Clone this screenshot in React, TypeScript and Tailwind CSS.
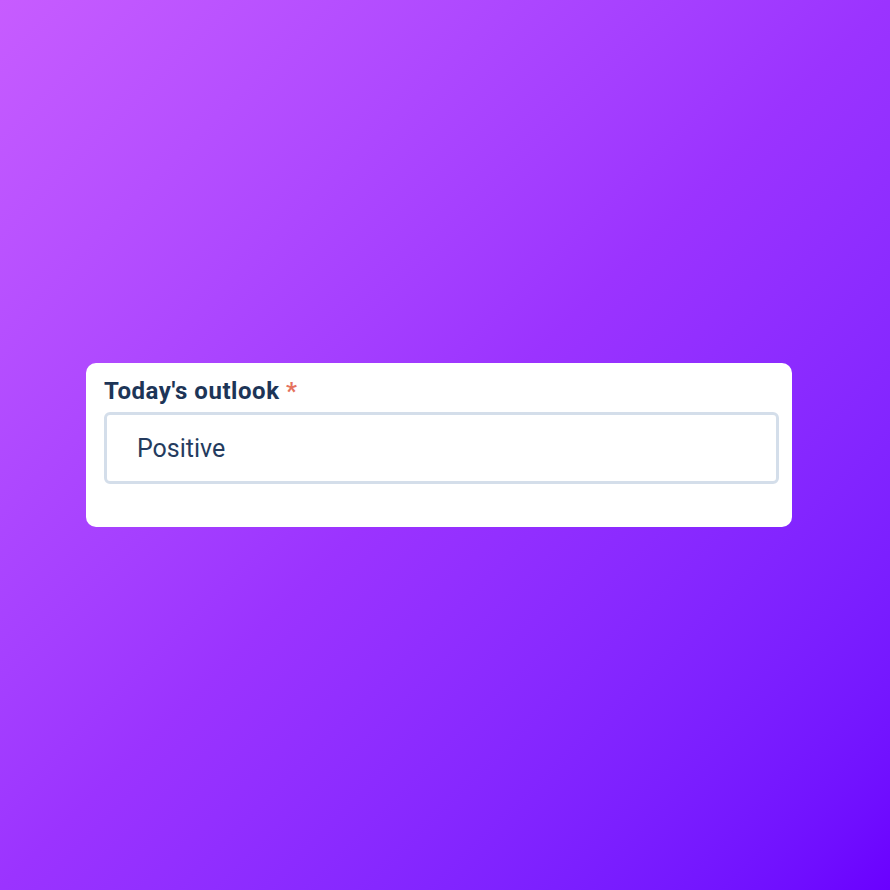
export default function App() {
  return (
    <div className="min-h-screen w-full bg-gradient-to-br from-[#c75cff] via-[#9b33ff] to-[#6a00ff] flex items-center font-['Roboto',sans-serif]">
      <div className="ml-[86px] w-[706px] bg-white rounded-[10px] pt-[13px] pb-[43px] px-[18px]">
        <label className="block text-[24px] leading-[30px] font-bold text-[#1d3557] tracking-[0.55px]">
          Today's outlook <span className="text-[#e5725e]">*</span>
        </label>
        <div className="mt-[6px] w-[675px] h-[72px] border-[3px] border-[#d4deea] rounded-[6px] flex items-center pl-[30px] pt-[2px]">
          <span className="text-[25px] text-[#243b5e]">Positive</span>
        </div>
      </div>
    </div>
  );
}
